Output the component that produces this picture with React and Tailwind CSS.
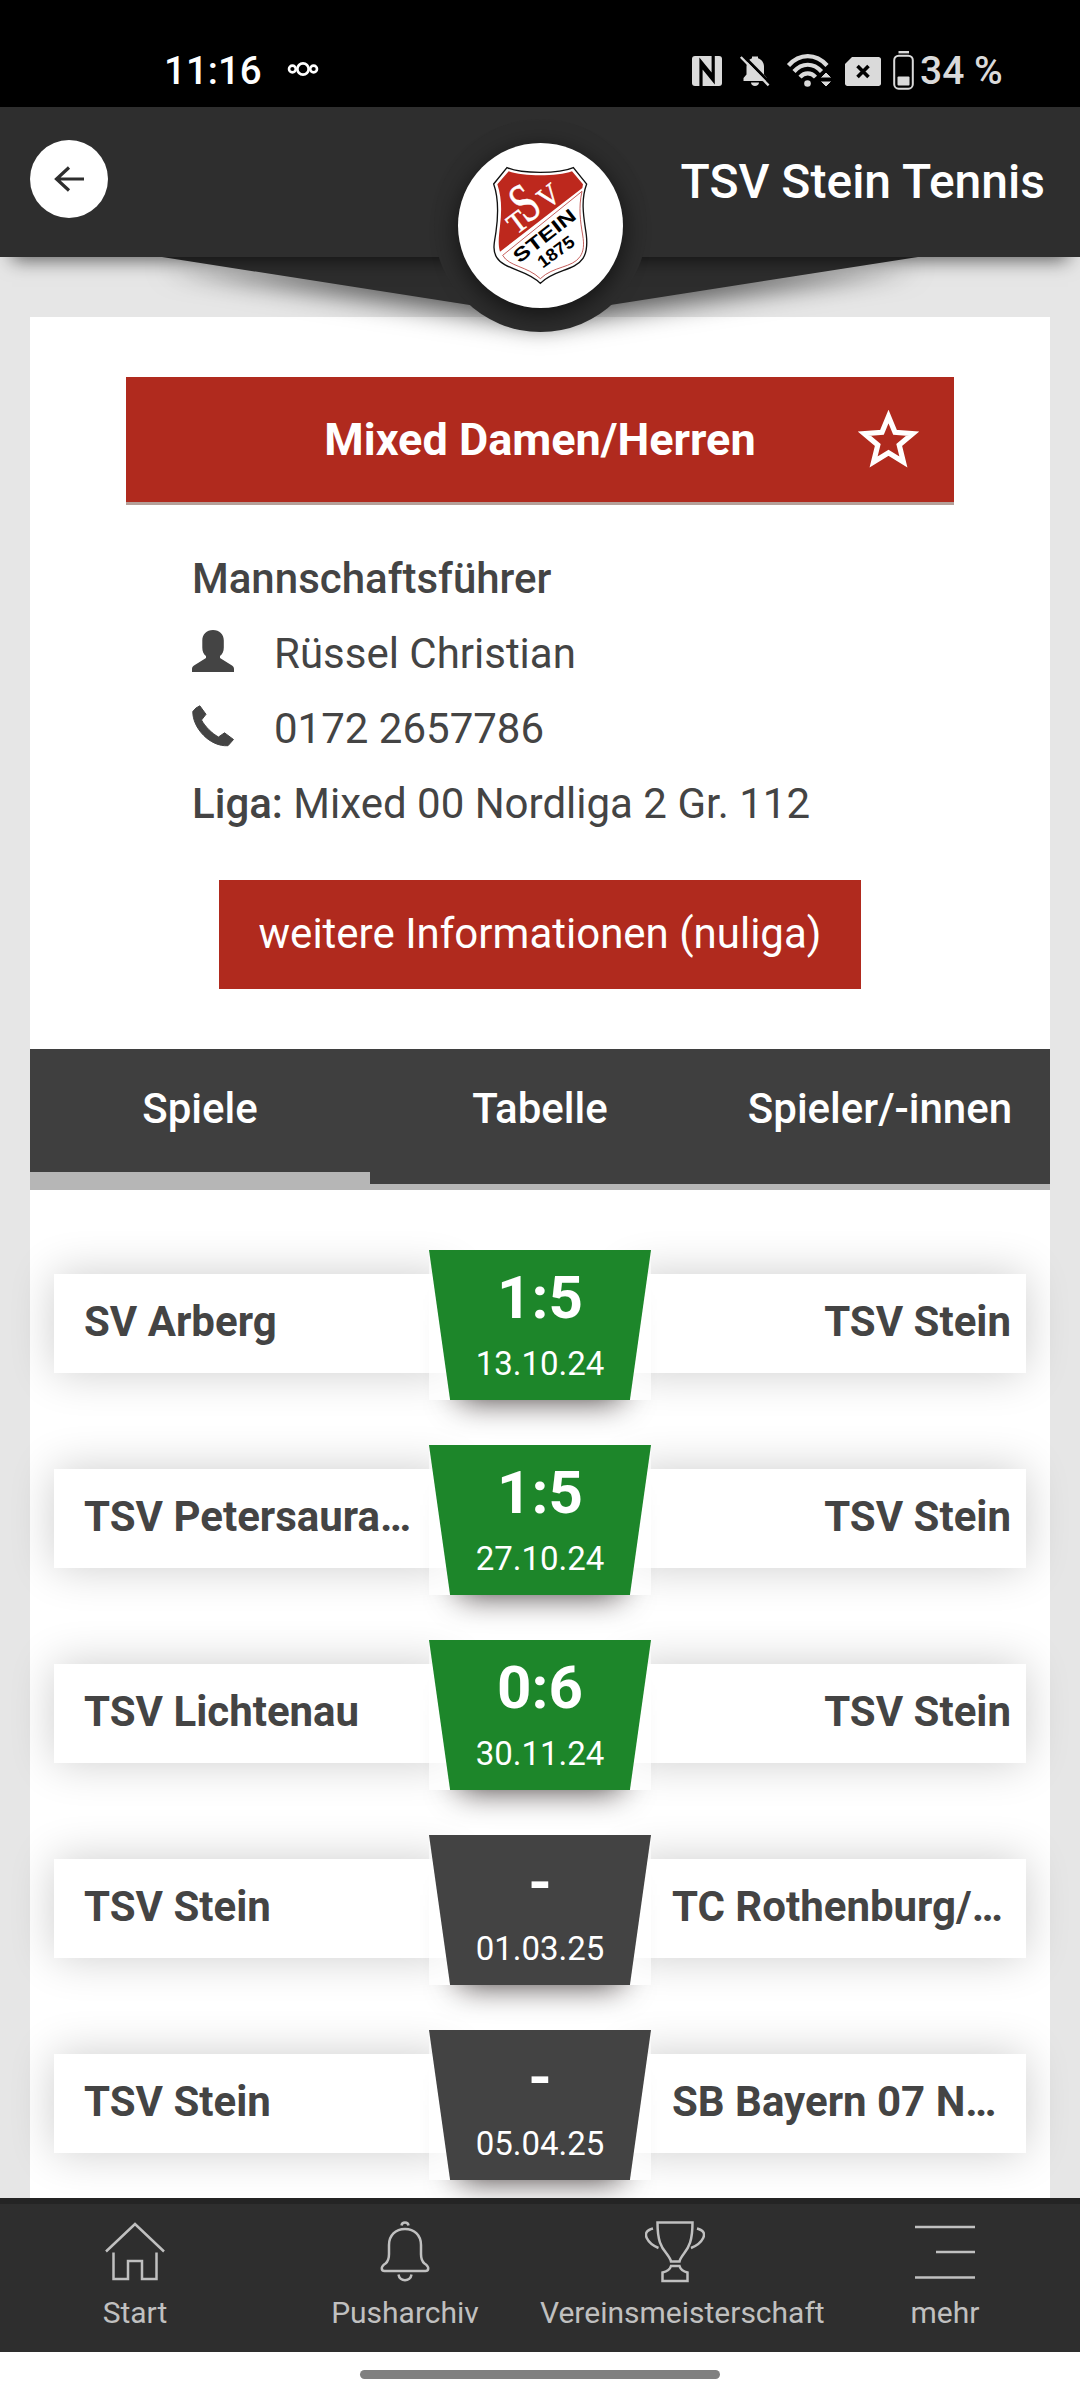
const matches = [
  { home: 'SV Arberg', away: 'TSV Stein', score: '1:5', date: '13.10.24', won: true },
  { home: 'TSV Petersaura…', away: 'TSV Stein', score: '1:5', date: '27.10.24', won: true },
  { home: 'TSV Lichtenau', away: 'TSV Stein', score: '0:6', date: '30.11.24', won: true },
  { home: 'TSV Stein', away: 'TC Rothenburg/…', score: '-', date: '01.03.25', won: false },
  { home: 'TSV Stein', away: 'SB Bayern 07 N…', score: '-', date: '05.04.25', won: false },
]

function StatusBar() {
  return (
    <div className="h-[107px] bg-black pt-[35px] flex items-center text-[#dadada]">
      <span className="ml-[164px] w-[103px] text-[38.5px] leading-none font-medium text-white whitespace-nowrap">11:16</span>
      <svg className="ml-[20px] mb-1 w-[32px] h-[16px]" viewBox="0 0 32 16" fill="none" stroke="#fff" strokeWidth="2.6">
        <circle cx="16" cy="8" r="5.6" />
        <circle cx="5.4" cy="8" r="3.4" />
        <circle cx="26.6" cy="8" r="3.4" />
      </svg>
      {/* NFC, lautlos, WLAN, SIM, Akku */}
      <svg className="ml-auto w-[228px] h-[40px] shrink-0" viewBox="690 49 228 40" fill="currentColor">
        <rect x="692" y="54" width="30" height="30" rx="3" />
        <path d="M701 84V60l11 13.500M713.200 54v24l-11-13.500" fill="none" stroke="#000" strokeWidth="3.200" />
        <path d="M743.500 79v-3l3-3.500v-8c0-4 2-7 5.500-8.200V54.500h6v1.800c3.500 1.200 6 4.200 6 8.200v8l3 3.500v3zM751 80.500h8c0 2-1.800 3.500-4 3.500s-4-1.500-4-3.500z" />
        <path d="M742.500 53l28 28.500" stroke="#000" strokeWidth="3" />
        <path d="M740.800 55l27.800 28.400" stroke="currentColor" strokeWidth="2.400" />
        <g fill="none" stroke="currentColor" strokeWidth="4.200">
          <path d="M788.500 63.500c11-12.500 27.500-12.500 38.500 0" />
          <path d="M794 69.500c8-9 19.500-9 27.500 0" />
          <path d="M800 75.200c4.500-5 11-5 15.500 0" />
        </g>
        <circle cx="807.500" cy="81.500" r="3.300" />
        <path d="M820 76l6-6 6 6zM820 79l6 6 6-6z" stroke="#000" strokeWidth="1" />
        <path d="M852 55h26.500c1.500 0 2.500 1 2.500 2.500v24c0 1.500-1 2.500-2.500 2.500h-31c-1.500 0-2.500-1-2.500-2.500V62z" />
        <path d="M857.500 64l11 11M868.500 64l-11 11" stroke="#000" strokeWidth="3.600" />
        <rect x="894.200" y="53.700" width="18.600" height="33" rx="4.500" fill="none" stroke="currentColor" strokeWidth="2" />
        <rect x="898.500" y="49" width="10.500" height="2.400" />
        <rect x="897.500" y="74.500" width="12" height="9" rx="1" />
      </svg>
      <span className="ml-[2px] w-[160px] text-[39px] leading-none font-medium whitespace-nowrap">34 %</span>
    </div>
  )
}

function Crest() {
  return (
    <svg className="w-full h-full" viewBox="55 69 495 495">
      <path
        d="M202 143C245 162 358 162 401 143L441 192C421 245 434 300 440 345C443 372 441 398 430 415C404 454 341 448 302 490C263 448 194 450 171 412C156 388 166 360 169 335C175 292 179 240 162 192Z"
        fill="#fff"
        stroke="#111"
        strokeWidth="4"
      />
      <path
        d="M207 154C250 170 354 170 397 154L430 193L428 204L181 395C174 372 178 345 181 318C186 275 187 235 173 193Z"
        fill="#bd281d"
      />
      <path
        d="M427 214C416 262 422 305 429 345C434 375 432 394 421 410C398 444 341 438 302 476C262 438 208 440 189 406Z"
        fill="none"
        stroke="#b9403c"
        strokeWidth="2.500"
      />
      <g fill="#fff" stroke="#fff" strokeWidth="1.500" fontFamily="Liberation Serif, serif">
        <text x="229" y="346" fontSize="88" transform="rotate(-37 229 346)" textLength="54" lengthAdjust="spacingAndGlyphs">T</text>
        <text x="261" y="313" fontSize="168" transform="rotate(-37 261 313)" textLength="66" lengthAdjust="spacingAndGlyphs">S</text>
        <text x="321" y="270" fontSize="90" transform="rotate(-37 321 270)" textLength="60" lengthAdjust="spacingAndGlyphs">V</text>
      </g>
      <g fill="#000" fontFamily="Liberation Sans, sans-serif" fontWeight="bold">
        <text x="239" y="431" fontSize="57" transform="rotate(-38 239 431)" textLength="222" lengthAdjust="spacingAndGlyphs">STEIN</text>
        <text x="309" y="446" fontSize="52" transform="rotate(-36 309 446)" textLength="124" lengthAdjust="spacingAndGlyphs">1875</text>
      </g>
    </svg>
  )
}

function Header() {
  return (
    <header className="relative z-20 h-[150px] bg-[#2e2e2e] flex items-center justify-between px-[30px]">
      {/* Spitze unter der Leiste */}
      <div className="absolute left-0 top-full w-full h-[100px] -z-10 drop-shadow-[0_10px_13px_rgba(0,0,0,0.6)]">
        <div className="mx-auto w-[756px] h-[59px] bg-[#2d2d2d] [clip-path:polygon(0_0,100%_0,50%_100%)]" />
      </div>
      <div className="absolute left-0 top-0 w-full h-full -z-10 shadow-[0_15px_18px_-12px_rgba(0,0,0,0.6)]" />
      <div className="absolute left-0 top-0 w-full h-full -z-10 bg-[#2e2e2e]" />
      <div className="absolute left-[434px] top-[12px] size-[213px] rounded-full bg-[#2d2d2d] p-6">
        <div className="size-[165px] rounded-full bg-white shadow-[0_6px_24px_rgba(0,0,0,0.6)]">
          <Crest />
        </div>
      </div>
      <button className="size-[78px] -mt-1.5 rounded-full bg-white flex items-center justify-center">
        <svg className="w-[30px] h-[26px]" viewBox="0 0 30 26" fill="none" stroke="#2e2e2e" strokeWidth="3.200">
          <path d="M30 13H2M15 1.500L2.500 13l12.500 11.500" />
        </svg>
      </button>
      <h1 className="mr-[5px] text-[48px] leading-none font-medium text-white whitespace-nowrap">TSV Stein Tennis</h1>
    </header>
  )
}

function TeamInfo() {
  return (
    <div className="flex flex-col items-center text-[42px] text-[#444444]">
      <div className="w-[828px] h-[128px] bg-[#b02a1e] border-b-[3px] border-[#b5a099] grid grid-cols-[1fr_auto_1fr] items-center">
        <h2 className="col-start-2 text-[45px] leading-none font-bold text-white">Mixed Damen/Herren</h2>
        <svg className="justify-self-end mr-[35px] w-[61px] h-[59px]" viewBox="0 0 61 59" fill="none" stroke="#fff" strokeWidth="5.200">
          <path d="M30.500 6.500L37 22.300L54.500 23.700L41.200 34.900L45.400 52L30.500 42.800L15.600 52L19.800 34.900L6.500 23.700L24 22.300Z" />
        </svg>
      </div>
      <div className="w-[696px] mt-[36px] leading-[75px] whitespace-nowrap">
        <p className="font-medium">Mannschaftsführer</p>
        <p className="flex items-center">
          <svg className="w-[42px] h-[42px] mr-[40px] -mt-1.5" viewBox="0 0 42 42" fill="currentColor">
            <path d="M21 0c6.500 0 10.800 4.500 10.800 10.500v7c0 4-1.300 6.500-3.800 8.500v2l12 7.500c1.300 1 2 2 2 3.500V42H0v-3c0-1.500.7-2.500 2-3.500L14 28v-2c-2.500-2-3.700-4.500-3.700-8.500v-7C10.300 4.500 14.500 0 21 0z" />
          </svg>
          Rüssel Christian
        </p>
        <p className="flex items-center">
          <svg className="w-[42px] h-[42px] mr-[40px] -mt-1.5" viewBox="0 0 42 42" fill="currentColor">
            <path d="M7.800 0.800L14 9.300L9.500 15C13 21.500 20 28.500 26.500 32L32.500 27.800L41.500 34.500L36 40.700C18 42 .5 23 .8 6.500Q3.500 2.500 7.800 .8z" stroke="currentColor" strokeWidth="1" strokeLinejoin="round" />
          </svg>
          0172 2657786
        </p>
        <p>
          <span className="font-medium">Liga:</span> Mixed 00 Nordliga 2 Gr. 112
        </p>
      </div>
      <button className="mt-[39px] w-[642px] h-[109px] pb-0.5 bg-[#b02a1e] text-white whitespace-nowrap">
        weitere Informationen (nuliga)
      </button>
    </div>
  )
}

function Tabs() {
  return (
    <nav className="mt-[60px] h-[141px] grid grid-cols-3 bg-[#3f3f3f] border-b-[6px] border-[#b6b6b6] text-[42px] leading-[119px] font-medium text-white text-center">
      <span className="border-b-[12px] border-[#b6b6b6]">Spiele</span>
      <span>Tabelle</span>
      <span>Spieler/-innen</span>
    </nav>
  )
}

function MatchRow({ match }) {
  return (
    <div className="h-[150px] grid grid-cols-[375px_222px_375px] text-[42px] font-bold text-[#444444]">
      <div className="col-start-1 row-start-1 mt-6 -mr-[22px] h-[99px] bg-white shadow-[0_0_45px_rgba(0,0,0,0.2)]" />
      <div className="col-start-3 row-start-1 mt-6 -ml-[22px] h-[99px] bg-white shadow-[0_0_45px_rgba(0,0,0,0.2)]" />
      <p className="col-start-1 row-start-1 z-10 mt-6 pl-[30px] leading-[95px] whitespace-nowrap">{match.home}</p>
      <div className="col-start-2 row-start-1 z-10 bg-white/60 shadow-[0_30px_32px_-30px_rgba(15,5,5,0.8)]">
        <div
          className={`h-[150px] text-center text-white [clip-path:polygon(0_0,100%_0,90.5%_100%,9.500%_100%)] ${match.won ? 'bg-[#1d862a]' : 'bg-[#434343]'}`}
        >
          <p className="text-[60px] leading-[95px]">{match.score}</p>
          <p className="text-[33px] leading-[37px] font-normal">{match.date}</p>
        </div>
      </div>
      <p className={`col-start-3 row-start-1 z-10 mt-6 pl-[21px] pr-[15px] leading-[95px] whitespace-nowrap ${match.away.endsWith('…') ? 'text-left' : 'text-right'}`}>
        {match.away}
      </p>
    </div>
  )
}

const navItems = [
  {
    label: 'Start',
    icon: (
      <>
        <path d="M1 30.500L30 3l29 27.500" />
        <path d="M8.500 31.500v26.500h14.500V40h14v18h14.500V31.500" />
      </>
    ),
  },
  {
    label: 'Pusharchiv',
    icon: (
      <>
        <path d="M26.500 4.500c.5-4 6.500-4 7 0" />
        <path d="M30 8c-9.500 0-16 6.500-16 16v9c0 4-1 7.500-3.500 9.500c-6 4-3.500 7.500-1 7.500h41c2.500 0 5-3.500-1-7.500C47 40.500 46 37 46 33v-9C46 14.500 39.500 8 30 8z" />
        <path d="M23.500 53.500c1 7.500 12 7.500 13 0" />
      </>
    ),
  },
  {
    label: 'Vereinsmeisterschaft',
    icon: (
      <>
        <path d="M12.500 1.500h35c0 18-3.500 24.500-8.500 31c-3 4-4 5.500-4.500 8h-8.500c-.5-2.500-1.500-4-4.500-8C16 26 12.500 19.500 12.500 1.500z" />
        <path d="M26 45h8.500c1 3.500 3.500 5.500 8 6.500V60H17.500v-8.500c4.500-1 7.500-3 8.500-6.500z" />
        <path d="M8 7.500C-6 11 3.500 23 13.500 27M52 7.500C66 11 56.500 23 46 27" />
      </>
    ),
  },
  {
    label: 'mehr',
    icon: <path d="M0 6h60M21 31h39M0 56.500h60" />,
  },
]

function BottomNav() {
  return (
    <nav className="relative z-20 h-[154px] grid grid-cols-[repeat(4,270px)] bg-[#2e2e2e] border-t-[6px] border-[#242424] text-[#c0c0c0]">
      {navItems.map(item => (
        <div key={item.label} className="flex flex-col items-center pt-[17px]">
          <svg className="w-[60px] h-[62px]" viewBox="0 0 60 62" fill="none" stroke="currentColor" strokeWidth="2.500">
            {item.icon}
          </svg>
          <span className="mt-[11px] w-full text-center text-[30px] leading-[38px] whitespace-nowrap">{item.label}</span>
        </div>
      ))}
    </nav>
  )
}

export default function App() {
  return (
    <div className="w-[1080px] h-[2400px] flex flex-col overflow-hidden bg-white font-[Roboto,sans-serif]">
      <StatusBar />
      <Header />
      <main className="h-[1941px] shrink-0 overflow-hidden bg-[#e6e6e6] px-[30px] pt-[60px]">
        <div className="h-full bg-white pt-[60px]">
          <TeamInfo />
          <Tabs />
          <div className="px-6 pt-[60px] flex flex-col gap-[45px]">
            {matches.map(match => (
              <MatchRow key={match.date} match={match} />
            ))}
          </div>
        </div>
      </main>
      <BottomNav />
      <div className="h-[48px] flex justify-center pt-[18px]">
        <div className="w-[360px] h-[9px] rounded-full bg-[#808080]" />
      </div>
    </div>
  )
}
